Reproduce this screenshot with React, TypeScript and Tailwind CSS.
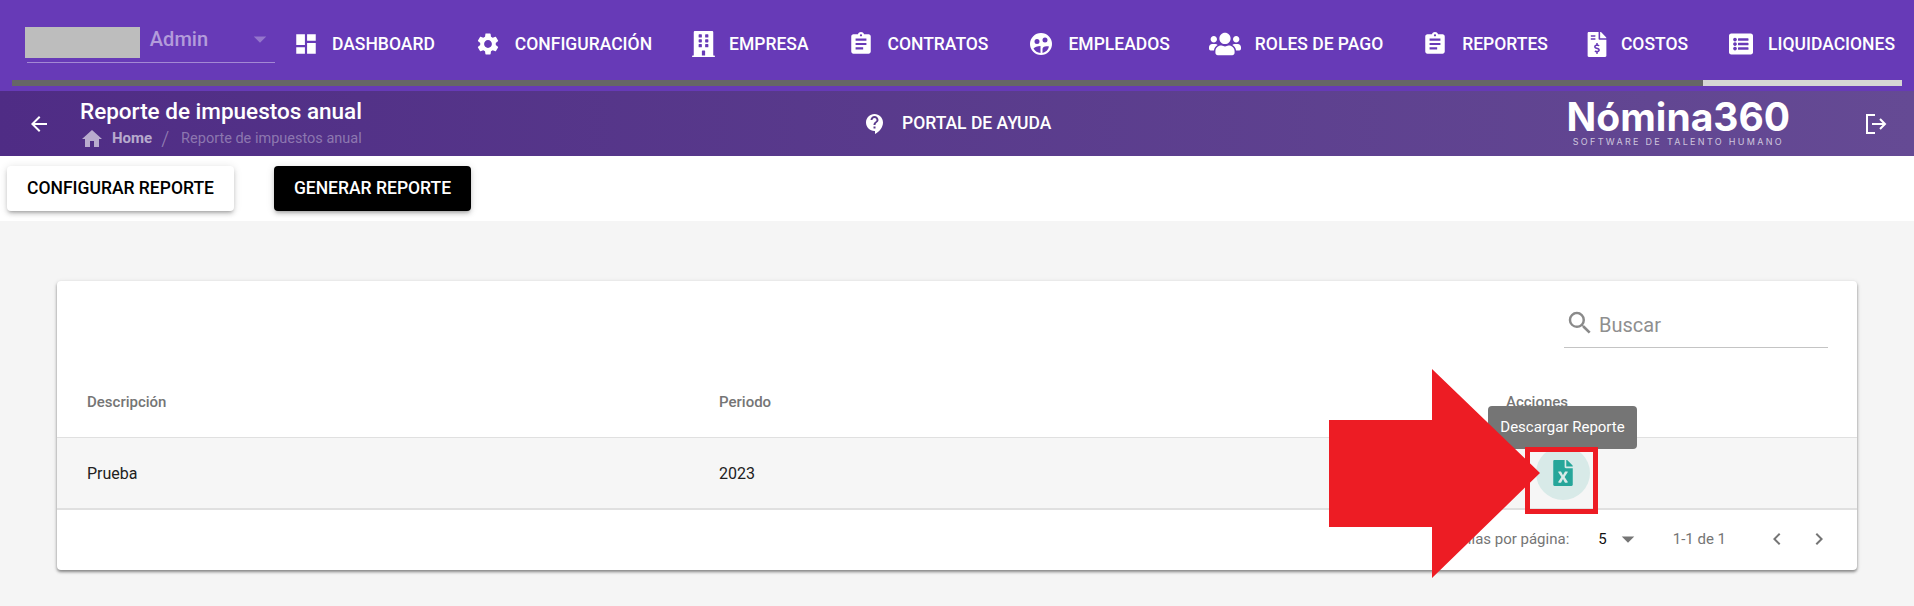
import { FaBuilding, FaFileExcel, FaFileInvoiceDollar, FaListAlt, FaUsers } from 'react-icons/fa';
import {
  MdArrowBack,
  MdArrowDropDown,
  MdAssignment,
  MdChevronLeft,
  MdChevronRight,
  MdContactSupport,
  MdDashboard,
  MdHome,
  MdSearch,
  MdSettings,
} from 'react-icons/md';

const roboto = "font-['Roboto',sans-serif]";

function FaceIcon() {
  return (
    <svg viewBox="0 0 24 24" className="h-[24px] w-[24px]" fill="currentColor">
      <path
        fillRule="evenodd"
        d="M12 1a11 11 0 1 0 0 22 11 11 0 0 0 0-22ZM8 7a2.500 2.500 0 1 1 0 5 2.500 2.500 0 0 1 0-5Zm8-1.500a2.500 2.500 0 1 1 0 5 2.500 2.500 0 0 1 0-5ZM11.500 21a9 9 0 0 1-7-4.500c1.500-1.500 3.500-2.500 7-2.500Zm2 0v-4c0-2 2.500-3.500 6.500-2.500A9 9 0 0 1 13.500 21Z"
      />
    </svg>
  );
}

function ExitIcon() {
  return (
    <svg viewBox="0 0 24 24" className="h-[24px] w-[24px]" fill="none" stroke="currentColor" strokeWidth="2">
      <path d="M11 3H3v18h8" />
      <path d="M8 12h13M16 7l5 5-5 5" />
    </svg>
  );
}

const navItems = [
  { label: 'DASHBOARD', icon: <MdDashboard className="h-[26px] w-[26px]" />, gap: 'gap-[13px]', box: 'ml-0' },
  { label: 'CONFIGURACIÓN', icon: <MdSettings className="h-[26px] w-[26px]" />, gap: 'gap-[14px]', box: 'ml-[40px]' },
  { label: 'EMPRESA', icon: <FaBuilding className="h-[26px] w-[23px]" />, gap: 'gap-[14px]', box: 'ml-[40px]' },
  { label: 'CONTRATOS', icon: <MdAssignment className="h-[26px] w-[26px]" />, gap: 'gap-[14px]', box: 'ml-[39px]' },
  { label: 'EMPLEADOS', icon: <FaceIcon />, gap: 'gap-[15px]', box: 'ml-[41px]' },
  { label: 'ROLES DE PAGO', icon: <FaUsers className="h-[26px] w-[32px]" />, gap: 'gap-[14px]', box: 'ml-[39px]' },
  { label: 'REPORTES', icon: <MdAssignment className="h-[26px] w-[26px]" />, gap: 'gap-[14px]', box: 'ml-[39px]' },
  { label: 'COSTOS', icon: <FaFileInvoiceDollar className="h-[25px] w-[20px]" />, gap: 'gap-[14px]', box: 'ml-[39px]' },
  { label: 'LIQUIDACIONES', icon: <FaListAlt className="h-[24px] w-[26px]" />, gap: 'gap-[14px]', box: 'ml-[40px]' },
];

function Header() {
  return (
    <header className="h-[91px] bg-[#673ab7] text-white">
      <div className="flex h-[80px] items-start">
        <div className="ml-[27px] mt-[27px] h-[36px] w-[248px] border-b border-white/40">
          <div className="flex items-start">
            <div className="-ml-[2px] h-[31px] w-[115px] bg-[#bdbdbd]" />
            <span className="ml-[10px] text-[20px] font-medium leading-[24px] text-white/50">Admin</span>
            <MdArrowDropDown className="-mt-[3px] ml-[37px] h-[30px] w-[30px] text-white/30" />
          </div>
        </div>
        <nav className="ml-[18px] mt-[28px] flex h-[32px] items-center">
          {navItems.map((item) => (
            <div key={item.label} className={`flex items-center ${item.gap} ${item.box}`}>
              {item.icon}
              <span className="text-[17.5px] font-medium leading-[20px] whitespace-nowrap">{item.label}</span>
            </div>
          ))}
        </nav>
      </div>
      <div className="mx-[12px] flex h-[6px]">
        <div className="w-[1691px] bg-[#666666]" />
        <div className="flex-1 bg-[#d5d5d5]" />
      </div>
    </header>
  );
}

function SubHeader() {
  return (
    <div className="flex h-[65px] items-center bg-gradient-to-r from-[#4f2c85] to-[#654a94] text-white">
      <MdArrowBack className="ml-[27px] h-[24px] w-[24px]" />
      <div className="ml-[29px] w-[780px]">
        <h1 className="-mt-[1px] text-[22.5px] font-medium leading-[28px]">Reporte de impuestos anual</h1>
        <div className="mt-[3px] flex h-[22px] items-center text-[14.500px]">
          <MdHome className="h-[24px] w-[24px] text-white/60" />
          <span className="ml-[8px] text-[15px] font-bold text-white/60">Home</span>
          <span className="ml-[9px] text-[20px] font-light text-white/40">/</span>
          <span className="ml-[12px] text-white/35">Reporte de impuestos anual</span>
        </div>
      </div>
      <MdContactSupport className="ml-[3px] h-[24px] w-[24px]" />
      <span className="ml-[15px] text-[17.5px] font-medium">PORTAL DE AYUDA</span>
      <div className="ml-[516px] flex w-[222px] flex-col items-center">
        <span className="font-['Inter',sans-serif] text-[39px] font-bold leading-[36px]">Nómina360</span>
        <span className="mt-[1px] font-['Inter',sans-serif] text-[9px] leading-[12px] tracking-[2.3px] text-white/70">
          SOFTWARE DE TALENTO HUMANO
        </span>
      </div>
      <div className="ml-[75px]">
        <ExitIcon />
      </div>
    </div>
  );
}

function Toolbar() {
  return (
    <div className="flex h-[65px] items-start gap-[40px] bg-white pl-[7px] pt-[10px]">
      <button className="h-[45px] w-[227px] rounded bg-white text-[17.5px] font-medium text-black shadow-[0_3px_3px_-2px_rgba(0,0,0,0.2),0_3px_4px_0_rgba(0,0,0,0.14),0_1px_8px_0_rgba(0,0,0,0.12)]">
        CONFIGURAR REPORTE
      </button>
      <button className="h-[45px] w-[197px] rounded bg-black text-[17.5px] font-medium text-white shadow-[0_3px_3px_-2px_rgba(0,0,0,0.2),0_3px_4px_0_rgba(0,0,0,0.14),0_1px_8px_0_rgba(0,0,0,0.12)]">
        GENERAR REPORTE
      </button>
    </div>
  );
}

function ReportTable() {
  return (
    <div className="mx-[57px] mt-[60px] h-[289px] rounded bg-white shadow-[0_2px_3px_0_rgba(0,0,0,0.4),0_1px_5px_0_rgba(0,0,0,0.12)]">
      <div className="flex h-[99px] justify-end pr-[29px] pt-[27px]">
        <div className="flex h-[40px] w-[264px] items-start gap-[4px] border-b border-[#c4c4c4] pl-[1px]">
          <MdSearch className="h-[30px] w-[30px] text-[#8a8a8a]" />
          <span className="mt-[5px] text-[20px] leading-[24px] text-[#8f8f8f]">Buscar</span>
        </div>
      </div>
      <div className="grid h-[58px] grid-cols-[632px_787px_1fr] items-center border-b border-[#e0e0e0] pb-[12px] pl-[30px] text-[15px] font-medium text-[#757575]">
        <span>Descripción</span>
        <span>Periodo</span>
        <span>Acciones</span>
      </div>
      <div className="grid h-[72px] grid-cols-[632px_787px_1fr] items-center border-b-2 border-[#e0e0e0] bg-[#f6f6f6] pl-[30px] text-[16px] text-[#212121]">
        <span className="pt-[2px]">Prueba</span>
        <span className="pt-[2px]">2023</span>
        <span className="ml-[30px] flex h-[54px] w-[54px] items-center justify-center rounded-full bg-[#d8eae8] text-[#26a69a]">
          <FaFileExcel className="h-[26px] w-[20px]" />
        </span>
      </div>
      <div className="flex h-[58px] items-center justify-end text-[15px] text-[#757575]">
        <span>Filas por página:</span>
        <span className="ml-[29px] text-[#111]">5</span>
        <MdArrowDropDown className="ml-[6px] h-[30px] w-[30px] text-[#757575]" />
        <span className="ml-[30px]">1-1 de 1</span>
        <MdChevronLeft className="ml-[39px] h-[24px] w-[24px]" />
        <MdChevronRight className="ml-[18px] mr-[26px] h-[24px] w-[24px]" />
      </div>
    </div>
  );
}

// the annotation painted over the screenshot
function Annotation() {
  return (
    <>
      <div className="absolute left-[1488px] top-[406px] flex h-[43px] w-[149px] items-center justify-center rounded bg-[#757575] text-[15px] text-white">
        Descargar Reporte
      </div>
      <div className="absolute left-[1525px] top-[447px] h-[67px] w-[73px] border-[5px] border-[#ed1c24]" />
      <svg className="absolute left-[1329px] top-[369px] h-[209px] w-[211px]" viewBox="0 0 211 209">
        <path d="M0 51H103V0L211 104 103 209V158H0Z" fill="#ed1c24" />
      </svg>
    </>
  );
}

export default function App() {
  return (
    <div className={`relative h-[606px] overflow-hidden bg-[#f5f5f5] ${roboto}`}>
      <Header />
      <SubHeader />
      <Toolbar />
      <ReportTable />
      <Annotation />
    </div>
  );
}
